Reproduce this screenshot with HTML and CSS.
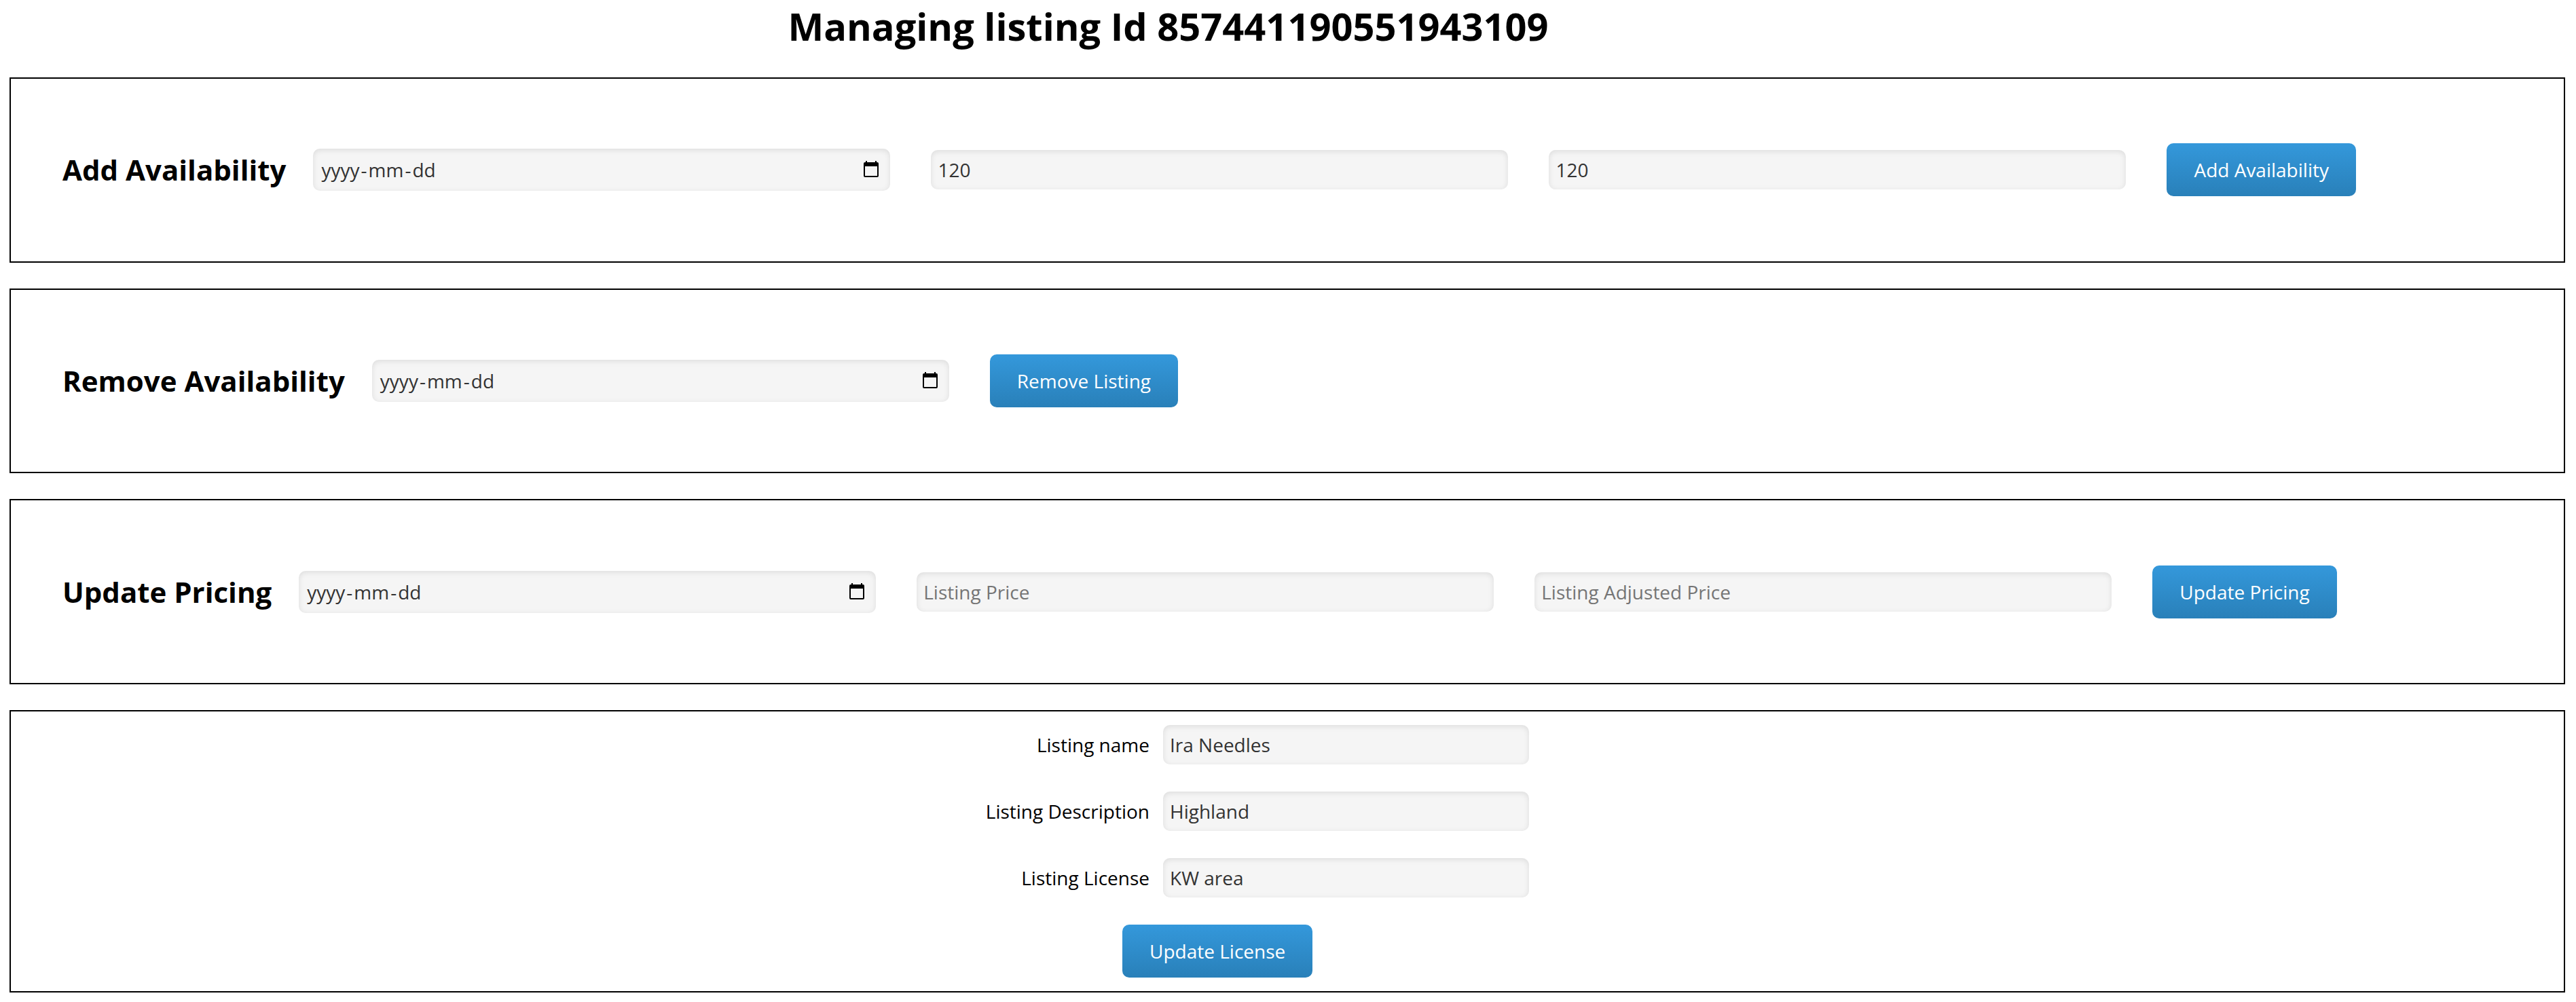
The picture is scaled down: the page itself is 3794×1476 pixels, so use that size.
FILE: index.html
```html
<!DOCTYPE html>
<html lang="en">
<head>
<meta charset="utf-8">
<title>Manage listing</title>
<link rel="stylesheet" href="styles.css">
</head>
<body>
<svg class="defs" aria-hidden="true">
  <symbol id="calendar" viewBox="0 0 22 24">
    <path fill-rule="evenodd" d="M3 0h2v2h12V0h2v2h1a2 2 0 0 1 2 2v18a2 2 0 0 1-2 2H2a2 2 0 0 1-2-2V4a2 2 0 0 1 2-2h1zM2 8v14h18V8z"/>
  </symbol>
</svg>
<h1 class="title">Managing listing Id 857441190551943109</h1>
<main class="panels">
  <form class="panel row">
    <h2 class="heading">Add Availability</h2>
    <div class="field date"><span class="parts"><span>yyyy</span>-<span>mm</span>-<span>dd</span></span><svg class="icon"><use href="#calendar"/></svg></div>
    <input class="field" type="text" value="120">
    <input class="field" type="text" value="120">
    <button class="button" type="button">Add Availability</button>
  </form>
  <form class="panel row">
    <h2 class="heading">Remove Availability</h2>
    <div class="field date"><span class="parts"><span>yyyy</span>-<span>mm</span>-<span>dd</span></span><svg class="icon"><use href="#calendar"/></svg></div>
    <button class="button" type="button">Remove Listing</button>
  </form>
  <form class="panel row">
    <h2 class="heading">Update Pricing</h2>
    <div class="field date"><span class="parts"><span>yyyy</span>-<span>mm</span>-<span>dd</span></span><svg class="icon"><use href="#calendar"/></svg></div>
    <input class="field" type="text" placeholder="Listing Price">
    <input class="field" type="text" placeholder="Listing Adjusted Price">
    <button class="button" type="button">Update Pricing</button>
  </form>
  <form class="panel details">
    <div class="grid">
      <label for="name">Listing name</label><input class="field" id="name" type="text" value="Ira Needles">
      <label for="description">Listing Description</label><input class="field" id="description" type="text" value="Highland">
      <label for="license">Listing License</label><input class="field" id="license" type="text" value="KW area">
    </div>
    <button class="button" type="button">Update License</button>
  </form>
</main>
</body>
</html>
```
FILE: styles.css
```css
* { box-sizing: border-box; }

body {
  margin: 0;
  background: #fff;
  color: #000;
  font: 28px/40px "Open Sans", sans-serif;
}

.defs { position: absolute; width: 0; height: 0; }

.title {
  width: 3441px;
  height: 114px;
  margin: 0;
  font-size: 56px;
  line-height: 77px;
  font-weight: 700;
  text-align: center;
}

.panels {
  display: flex;
  flex-direction: column;
  gap: 38px;
  margin: 0 16px 0 14px;
}

.panel { border: 2px solid #000; }

.row {
  display: flex;
  align-items: center;
  gap: 60px;
  height: 272.67px;
  padding: 0 76px;
}

.heading {
  margin: 0 -20px 0 0;
  font-size: 42px;
  line-height: 60px;
  font-weight: 700;
  white-space: nowrap;
}

.field {
  flex: none;
  width: 850px;
  height: 58px;
  margin: 0;
  padding: 0 10px;
  border: 0;
  border-radius: 10px;
  background: #f5f5f5;
  box-shadow: inset 0 2px 8px rgba(0, 0, 0, .1);
  color: #333;
  font: inherit;
}

.field::placeholder { color: #757575; opacity: 1; }

.date {
  display: flex;
  align-items: center;
  justify-content: space-between;
  height: 62px;
  padding-right: 17px;
}

.parts span { padding: 0 2px; }

.icon { width: 22px; height: 24px; margin-bottom: 2px; fill: #000; }

.button {
  flex: none;
  height: 78px;
  padding: 0 40px;
  border: 0;
  border-radius: 10px;
  background: linear-gradient(#3498db, #2980b9);
  color: #fff;
  font: inherit;
  white-space: nowrap;
}

.details {
  display: flex;
  flex-direction: column;
  align-items: flex-start;
  gap: 40px;
  height: 416px;
  padding-top: 20px;
}

.grid {
  display: grid;
  grid-template-columns: 1677px 539px;
  gap: 40px 20px;
  align-items: center;
}

.grid label { text-align: right; }
.grid .field { width: 539px; }
.details .button { margin-left: 1637px; }
```
